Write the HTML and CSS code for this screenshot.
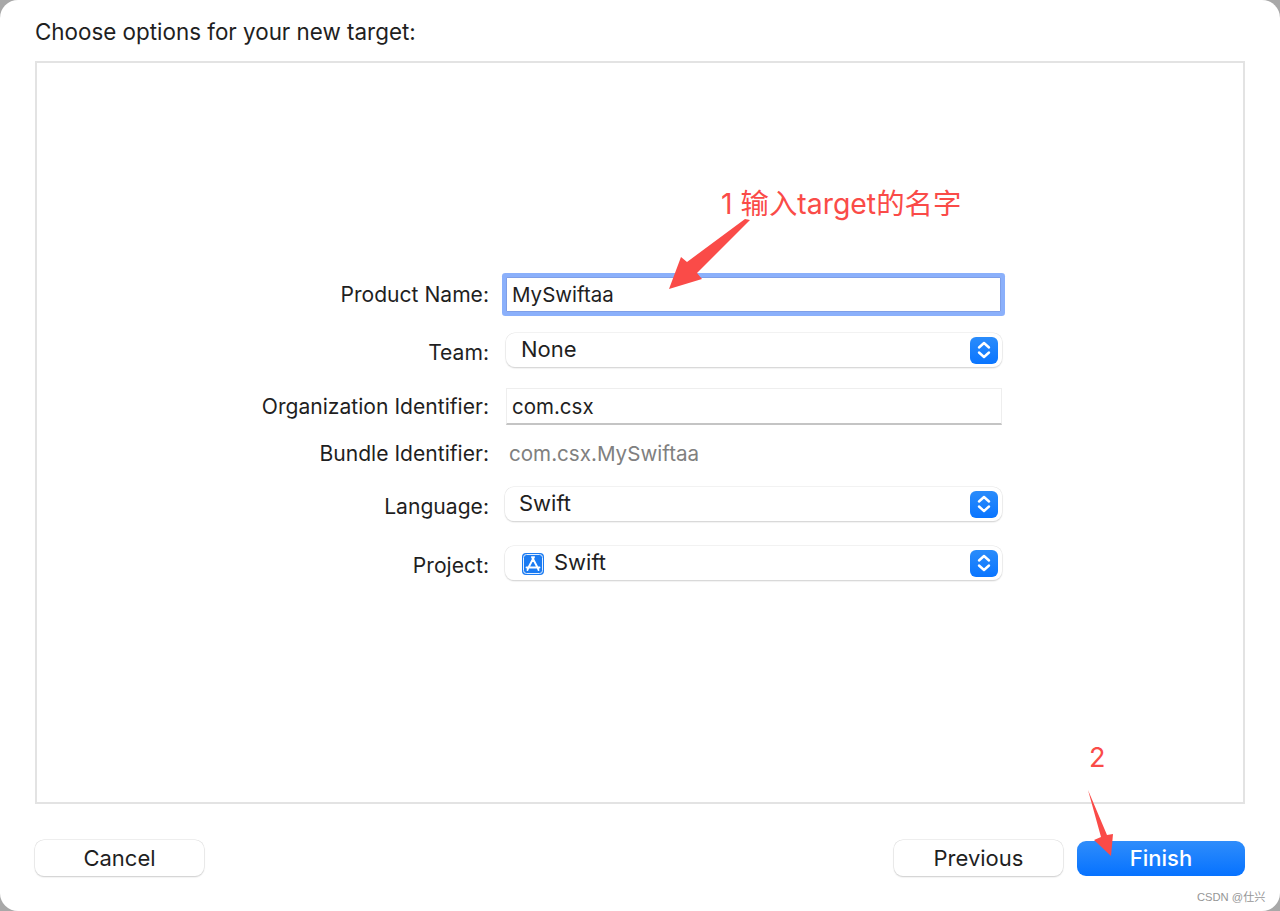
FILE: index.html
```html
<!DOCTYPE html>
<html lang="en">
  <head>
    <meta charset="UTF-8" />
    <meta name="viewport" content="width=device-width, initial-scale=1.0" />
    <title>Choose options for your new target</title>
    <link rel="stylesheet" href="styles.css">
  </head>
  <body>
    <div class="window">
      <div class="sheet-title">Choose options for your new target:</div>

      <div class="panel">
        <div class="form">
          <div class="row row-product">
            <div class="label">Product Name:</div>
            <div class="text-field focused">MySwiftaa</div>
          </div>
          <div class="row row-team">
            <div class="label label-popup">Team:</div>
            <div class="popup">
              <span class="popup-text">None</span>
              <span class="stepper">
                <svg width="14" height="20" viewBox="0 0 14 20"><path d="M2 7.500 7 3l5 4.500M2 12.500 7 17l5-4.500" /></svg>
              </span>
            </div>
          </div>
          <div class="row row-org">
            <div class="label">Organization Identifier:</div>
            <div class="text-field plain">com.csx</div>
          </div>
          <div class="row row-bundle">
            <div class="label">Bundle Identifier:</div>
            <div class="static-value">com.csx.MySwiftaa</div>
          </div>
          <div class="row row-language">
            <div class="label label-popup">Language:</div>
            <div class="popup wide">
              <span class="popup-text">Swift</span>
              <span class="stepper">
                <svg width="14" height="20" viewBox="0 0 14 20"><path d="M2 7.500 7 3l5 4.500M2 12.500 7 17l5-4.500" /></svg>
              </span>
            </div>
          </div>
          <div class="row row-project">
            <div class="label label-popup">Project:</div>
            <div class="popup wide">
              <svg class="app-icon" width="22" height="22" viewBox="0 0 22 22">
                <rect width="22" height="22" rx="4" fill="#1b7bf2" />
                <rect x="1.500" y="1.500" width="19" height="19" rx="3" fill="none" stroke="#e3effe" stroke-width="1" />
                <path d="M12 4 6.500 14.500M10 4l5.500 10.500M4.500 14.500h13M6.500 14.500 5.500 17M15.500 14.500l1 2.500" fill="none" stroke="#fff" stroke-width="1.900" stroke-linecap="round" />
              </svg>
              <span class="popup-text">Swift</span>
              <span class="stepper">
                <svg width="14" height="20" viewBox="0 0 14 20"><path d="M2 7.500 7 3l5 4.500M2 12.500 7 17l5-4.500" /></svg>
              </span>
            </div>
          </div>
        </div>
      </div>

      <div class="footer">
        <button class="btn">Cancel</button>
        <div class="footer-right">
          <button class="btn">Previous</button>
          <button class="btn btn-primary">Finish</button>
        </div>
      </div>

      <!-- red markup drawn on top of the screenshot -->
      <div class="note note-one">1 输入target的名字</div>
      <div class="note note-two">2</div>
      <svg class="arrows" width="1280" height="911" viewBox="0 0 1280 911">
        <path d="M745 219 750 220 697 273 702 279 669 289 681 257 687 262Z" />
        <path d="M1088 790 1107 835 1113 834 1111 856 1094 840 1101 837Z" />
      </svg>
      <div class="watermark">CSDN @仕兴</div>
    </div>
  </body>
</html>
```

FILE: styles.css
```css
:root {
  --text: #1f1f1f;
  --line: #e3e3e3;
  --blue: #0a7bff;
  --red: #fa4b48;
}

* {
  margin: 0;
  padding: 0;
  box-sizing: border-box;
}

body {
  font-family: "Inter", "Noto Sans CJK SC", sans-serif;
  background-color: #a8a8a8;
  color: var(--text);
  height: 911px;
  overflow: hidden;
}

.window {
  position: relative;
  height: 911px;
  background-color: #fff;
  border-radius: 18px;
  padding: 0 35px;
}

.sheet-title {
  height: 61px;
  padding-top: 19px;
  font-size: 22.400px;
  line-height: 26px;
}

.panel {
  height: 743px;
  border: 2px solid var(--line);
}

.form {
  padding-top: 214px;
}

.row {
  display: grid;
  grid-template-columns: 452px 497px;
  column-gap: 16px;
  align-items: center;
  font-size: 21.100px;
}

.row-team { margin-top: 21px; }
.row-org { margin-top: 21px; }
.row-bundle { margin-top: 10px; }
.row-language { margin-top: 16px; }
.row-project { margin-top: 25px; }

.label {
  text-align: right;
}

.label-popup {
  padding-top: 4px;
}

.text-field {
  display: flex;
  align-items: center;
  background-color: #fff;
  padding-left: 5px;
  font-size: 20.500px;
}

.text-field.focused {
  height: 35px;
  margin-left: 1px;
  margin-right: 1px;
  border: 1px solid #7f9fe8;
  box-shadow: 0 0 0 4px #8bb0fb;
  border-radius: 1px;
}

.text-field.plain {
  height: 37px;
  margin-left: 1px;
  border: 1px solid #eeeeee;
  border-bottom: 2px solid #c4c4c4;
}

.static-value {
  height: 36px;
  display: flex;
  align-items: center;
  padding-left: 4px;
  color: #808080;
  font-size: 20.600px;
}

.popup {
  display: flex;
  align-items: center;
  height: 34px;
  margin-left: 1px;
  padding-left: 15px;
  background-color: #fff;
  border-radius: 9px;
  box-shadow: 0 0 0 0.500px #e6e6e6, 0 1px 1.500px #c2c2c2;
  font-size: 22px;
}

.popup.wide {
  margin-left: 0;
  padding-left: 14px;
}

.popup-text {
  flex: 1;
  margin-top: -3px;
}

.app-icon {
  margin: 2px 10px 0 3px;
}

.stepper {
  display: flex;
  align-items: center;
  justify-content: center;
  width: 28px;
  height: 27px;
  margin-right: 4px;
  border-radius: 6px;
  background: linear-gradient(#2a8cfb, #0a75ff);
}

.stepper svg path {
  fill: none;
  stroke: #fff;
  stroke-width: 2.400;
  stroke-linecap: round;
  stroke-linejoin: round;
}

.footer {
  display: flex;
  justify-content: space-between;
  padding-top: 36px;
}

.footer-right {
  display: flex;
  gap: 14px;
}

.btn {
  width: 169px;
  height: 36px;
  border: none;
  border-radius: 9px;
  background-color: #fff;
  color: var(--text);
  font-family: inherit;
  font-size: 22px;
  box-shadow: 0 0 0 0.500px #dedede, 0 1px 1.500px #c4c4c4;
}

.btn-primary {
  width: 168px;
  height: 35px;
  margin-top: 1px;
  padding-bottom: 2px;
  color: #fff;
  background: linear-gradient(#2f8dfb, #0672ff);
  box-shadow: none;
  font-weight: 500;
}

.note {
  position: absolute;
  color: var(--red);
  font-size: 28.400px;
  line-height: 34px;
}

.note-one {
  left: 721px;
  top: 187px;
}

.note-two {
  left: 1089px;
  top: 741px;
  font-size: 27px;
}

.arrows {
  position: absolute;
  left: 0;
  top: 0;
  pointer-events: none;
}

.arrows path {
  fill: var(--red);
}

.watermark {
  position: absolute;
  left: 1197px;
  top: 888px;
  font-family: "Liberation Sans", "Noto Sans CJK SC", sans-serif;
  font-size: 11.200px;
  color: #969696;
}
```
